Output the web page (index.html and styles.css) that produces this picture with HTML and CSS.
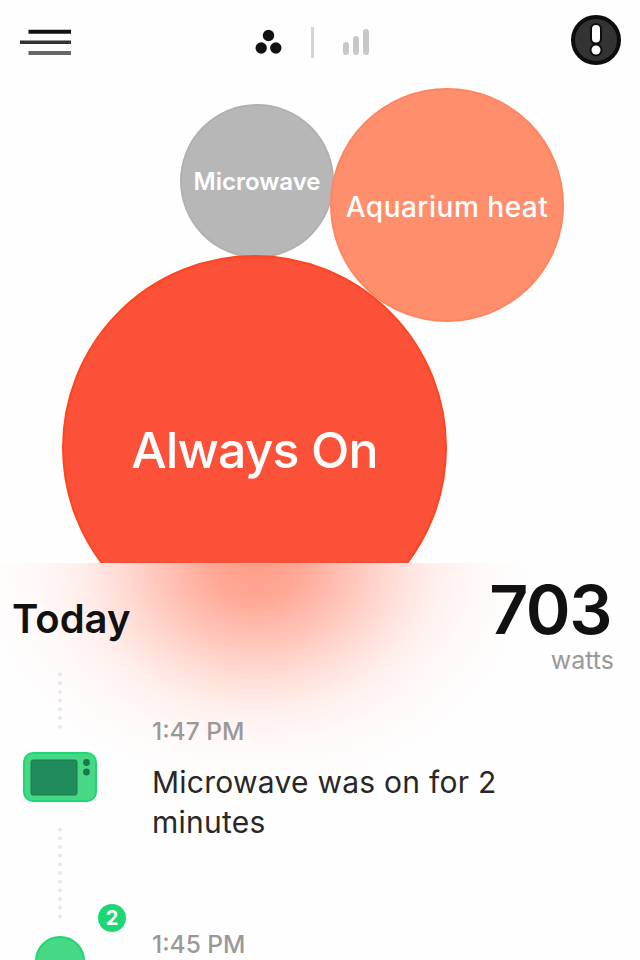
FILE: index.html
```
<!DOCTYPE html>
<html lang="en">
<head>
<meta charset="utf-8">
<title>Now</title>
<link rel="stylesheet" href="styles.css">
</head>
<body>
<main class="screen">
  <header class="topbar">
    <svg class="menu-icon" width="54" height="28" viewBox="0 0 54 28">
      <path d="M8.500 3.700H51" stroke="#111" stroke-width="4"/>
      <path d="M0 14.200H51" stroke="#333" stroke-width="3.600"/>
      <path d="M8.500 25H51" stroke="#666" stroke-width="3.800"/>
    </svg>
    <nav class="views">
      <svg width="28" height="26" viewBox="0 0 28 26" fill="#111">
        <circle cx="13.500" cy="6.500" r="5.700"/><circle cx="6.200" cy="19" r="5.700"/><circle cx="20.800" cy="19" r="5.700"/>
      </svg>
      <span class="divider"></span>
      <svg width="28" height="28" viewBox="0 0 28 28" stroke="#c8c8c8" stroke-width="6" stroke-linecap="round">
        <path d="M4 17V24M14 11V24M24 4V24"/>
      </svg>
    </nav>
    <svg class="alert-icon" width="50" height="50" viewBox="0 0 50 50">
      <circle cx="25" cy="25" r="23" fill="#333" stroke="#0d0d0d" stroke-width="4"/>
      <path d="M25 14V24" stroke="#0d0d0d" stroke-width="12" stroke-linecap="round"/>
      <circle cx="25" cy="35" r="6.500" fill="#0d0d0d"/>
      <path d="M25 14V23.500" stroke="#fff" stroke-width="8" stroke-linecap="round"/>
      <circle cx="25" cy="35" r="4.500" fill="#fff"/>
    </svg>
  </header>
  <section class="bubbles">
    <div class="bubble microwave"><span>Microwave</span></div>
    <div class="bubble aquarium"><span>Aquarium heat</span></div>
    <div class="bubble always"><span>Always On</span></div>
  </section>
  <section class="feed">
    <div class="summary">
      <h1 class="day">Today</h1>
      <div class="usage">
        <div class="value">703</div>
        <div class="unit">watts</div>
      </div>
    </div>
    <div class="timeline">
      <div class="rail">
        <svg width="4" height="58" viewBox="0 0 4 58"><path class="dots" d="M2 2.500V56"/></svg>
        <svg class="device" width="74" height="50" viewBox="0 0 74 50">
          <rect x="1" y="1" width="72" height="48" rx="9" fill="#47d885" stroke="#1dd775" stroke-width="2"/>
          <rect x="8" y="8" width="46" height="35" rx="2" fill="#218c5b" stroke="#1c7a4e"/>
          <circle cx="63.500" cy="10.500" r="3.400" fill="#18794b"/><circle cx="63.500" cy="20" r="3.400" fill="#18794b"/>
        </svg>
        <svg width="4" height="98" viewBox="0 0 4 98"><path class="dots" d="M2 2.500V96"/></svg>
        <div class="group"><span class="count">2</span></div>
      </div>
      <div class="events">
        <article class="event">
          <time>1:47 PM</time>
          <p>Microwave was on for 2 minutes</p>
        </article>
        <article class="event">
          <time>1:45 PM</time>
        </article>
      </div>
    </div>
  </section>
</main>
</body>
</html>
```

FILE: styles.css
```
* { box-sizing: border-box; margin: 0; padding: 0; }
body { background: #fff; font-family: Inter, "Liberation Sans", sans-serif; color: #111; }
svg { display: block; flex: none; }
.screen { width: 640px; height: 960px; overflow: hidden; background: #fefefe; }
.topbar { height: 84px; padding: 0 19px 0 20px; display: grid; grid-template-columns: 235px auto 1fr; align-items: center; }
.views { display: flex; align-items: center; gap: 28px; }
.divider { width: 3px; height: 31px; background: #d4d4d4; }
.alert-icon { justify-self: end; margin-top: -4px; }
.bubbles { position: relative; height: 479px; overflow: hidden; }
.bubble { position: absolute; border-radius: 50%; display: flex; align-items: center; justify-content: center; color: #fff; white-space: nowrap; }
.microwave { left: 180px; top: 20px; width: 154px; height: 154px; background: #b7b7b7; border: 2px solid #b0b0b0; font-size: 24px; font-weight: 600; }
.aquarium { left: 330px; top: 4px; width: 234px; height: 234px; padding-top: 4px; background: #ff8e6d; border: 2px solid #ff8560; font-size: 28px; font-weight: 500; letter-spacing: 0.5px; }
.always { left: 62px; top: 171px; width: 385px; height: 385px; padding-top: 4px; background: #fb5139; border: 2px solid #ff4420; font-size: 50px; font-weight: 500; letter-spacing: -0.9px; }
.feed { height: 397px; background: radial-gradient(ellipse 275px 225px at 256px 0, #ff9d87 0%, #ffa895 16%, #ffc0b3 32%, #ffdcd5 50%, #ffefec 65%, #fff9f8 80%, #fefefe 100%); }
.summary { height: 109px; display: flex; justify-content: space-between; padding: 0 26px 0 12px; }
.day { font-size: 40px; line-height: 48px; font-weight: 600; margin-top: 32px; }
.usage { text-align: right; }
.value { font-size: 68px; line-height: 58px; font-weight: 600; letter-spacing: -1.5px; margin: 17px 3px 0 0; }
.unit { font-size: 25px; line-height: 30px; margin-top: 7px; color: #999; }
.timeline { display: flex; }
.rail { width: 120px; flex: none; display: flex; flex-direction: column; align-items: center; }
.dots { stroke: #ebe4f1; stroke-width: 4; stroke-linecap: round; stroke-dasharray: 0 8.700; }
.device { margin: 22px 0 25px; }
.group { position: relative; width: 50px; height: 50px; margin-top: 11px; border-radius: 50%; background: #47d885; border: 2px solid #1dd775; }
.count { position: absolute; left: 61px; top: -34px; width: 28px; height: 28px; border-radius: 50%; background: #1dd775; color: #fff; font-size: 20px; line-height: 28px; font-weight: 700; text-align: center; }
.events { width: 400px; padding: 43px 0 0 32px; }
.event { height: 213px; }
time { display: block; font-size: 24.500px; line-height: 32px; font-weight: 500; color: #999; }
.event p { margin-top: 15px; font-size: 30px; line-height: 40px; letter-spacing: 0.25px; color: #282828; }
```
